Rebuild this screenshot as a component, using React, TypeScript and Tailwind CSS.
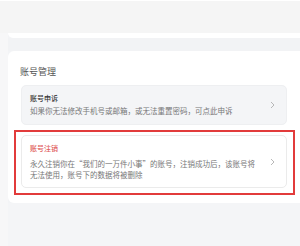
import React from "react"

const font = { fontFamily: '"Liberation Sans", "Noto Sans CJK SC", sans-serif' }
const cjk = { fontFamily: '"Noto Sans CJK SC", sans-serif' }

function Chevron() {
  return (
    <svg width="5" height="8" viewBox="0 0 5 8" className="shrink-0">
      <path d="M1 1 L4 4 L1 7" fill="none" stroke="#b0b0b0" strokeWidth="0.9" />
    </svg>
  )
}

export default function App() {
  return (
    <div className="w-[300px] h-[246px] bg-[#f3f4f6] overflow-hidden" style={font}>
      <div className="h-[33px] bg-[#f5f5f5] border-t border-white" />
      <div className="flex">
        <div className="w-2 shrink-0 bg-[#f7f7f8]" />
        <div className="flex-1 h-[5px] bg-white rounded-bl-[5px]" />
      </div>
      <div className="flex h-[13px]">
        <div className="w-2 shrink-0 bg-[#f7f7f8]" />
        <div className="flex-1 bg-[#f2f3f5]" />
      </div>
      <div className="flex">
        <div className="w-2 shrink-0 bg-[#f7f7f8]" />
        <div className="flex-1 h-[152px] bg-white rounded-l-[6px] pl-[12px] pt-[15px]">
          <div className="text-[9px] leading-[12px] text-[#555]">账号管理</div>

          <div className="mt-[7px] ml-[1px] w-[266px] h-[40px] rounded-[5px] bg-[#f4f5f7] border border-[#eeeff1] flex items-center justify-between pl-[8px] pr-[11px]">
            <div>
              <div className="text-[7px] leading-[10px] text-[#333] font-medium">账号申诉</div>
              <div className="text-[7.5px] leading-[11px] text-[#777] mt-[2px] whitespace-nowrap">
                如果你无法修改手机号或邮箱，或无法重置密码，可点此申诉
              </div>
            </div>
            <Chevron />
          </div>

          <div className="relative mt-[10px] ml-[1px] w-[266px]">
            <div className="absolute -left-[7px] -right-[8px] -top-[5px] -bottom-[7px] border-2 border-[#e23b3b] pointer-events-none" />
            <div className="h-[53px] rounded-[5px] bg-white border border-[#ebebeb] flex items-center justify-between pl-[8px] pr-[11px]">
              <div>
                <div className="text-[7px] leading-[10px] text-[#e05a5a] font-medium">账号注销</div>
                <div className="w-[229px] text-[7.5px] leading-[11px] text-[#777] mt-[4px]" style={cjk}>
                  永久注销你在“我们的一万件小事”的账号，注销成功后，该账号将无法使用，账号下的数据将被删除
                </div>
              </div>
              <Chevron />
            </div>
          </div>
        </div>
      </div>
      <div className="flex h-[43px]">
        <div className="w-2 shrink-0 bg-[#f7f7f8]" />
        <div className="flex-1 bg-[#f4f5f7]" />
      </div>
    </div>
  )
}
